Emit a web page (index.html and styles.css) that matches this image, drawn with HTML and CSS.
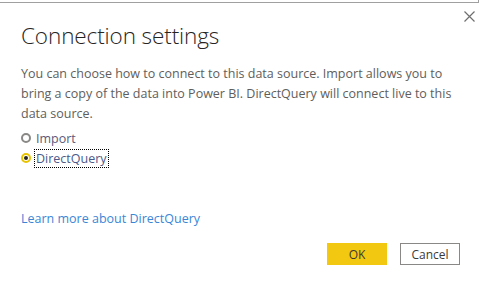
FILE: index.html
```html
<!DOCTYPE html>
<html lang="en">
<head>
    <meta charset="UTF-8">
    <title>Connection settings</title>
    <link rel="stylesheet" href="styles.css">
</head>
<body>
    <div class="frame-edge"></div>
    <div class="dialog">
        <button class="close" aria-label="Close">
            <svg width="11" height="11" viewBox="0 0 11 11">
                <path d="M0.5 0.5 L10.5 10.5 M10.5 0.5 L0.5 10.5" stroke="#6f6f6f" stroke-width="1.2" fill="none"/>
            </svg>
        </button>

        <h2 class="title">Connection settings</h2>

        <p class="description">You can choose how to connect to this data source. Import allows you to bring a copy of the data into Power BI. DirectQuery will connect live to this data source.</p>

        <div class="options">
            <label class="option">
                <span class="radio"></span>
                <span class="option-text">Import</span>
            </label>
            <label class="option selected">
                <span class="radio"></span>
                <span class="option-text focused">DirectQuery</span>
            </label>
        </div>

        <a class="learn-more" href="#">Learn more about DirectQuery</a>

        <div class="actions">
            <button class="btn btn-primary">OK</button>
            <button class="btn btn-secondary">Cancel</button>
        </div>
    </div>
</body>
</html>
```

FILE: styles.css
```css
/* General Styling */
* {
    margin: 0;
    padding: 0;
    box-sizing: border-box;
    font-family: 'Open Sans', 'Noto Sans', sans-serif;
}

body {
    width: 485px;
    height: 287px;
    background: #fff;
    position: relative;
    overflow: hidden;
}

/* cropped window border at the top */
.frame-edge {
    position: absolute;
    top: 0;
    left: 0;
    width: 479px;
    height: 3px;
    border-bottom: 1px solid #a0a0a0;
    border-right: 1px solid #a0a0a0;
}

.dialog {
    padding: 20px 21px 0 21px;
    position: relative;
    height: 100%;
}

.close {
    position: absolute;
    top: 11px;
    right: 10px;
    width: 11px;
    height: 11px;
    border: none;
    background: none;
    cursor: pointer;
    display: flex;
}

.title {
    font-size: 22.5px;
    font-weight: 300;
    color: #252423;
    line-height: 32px;
    letter-spacing: -0.1px;
}

.description {
    margin-top: 12px;
    font-size: 12.5px;
    line-height: 20px;
    color: #605e5c;
    width: 440px;
}

.options {
    margin-top: 4px;
    display: flex;
    flex-direction: column;
}

.option {
    display: flex;
    align-items: center;
    height: 20px;
    font-size: 12.5px;
    color: #605e5c;
}

.radio {
    width: 10px;
    height: 10px;
    border-radius: 50%;
    border: 2px solid #8a8886;
    margin-right: 4px;
    position: relative;
}

.option.selected .radio {
    border-color: #e8c300;
}

.option.selected .radio::after {
    content: "";
    position: absolute;
    top: 1px;
    left: 1px;
    width: 4px;
    height: 4px;
    border-radius: 50%;
    background: #252423;
}

.option-text {
    color: #5b5a7a;
    padding: 0 1px;
}

.option-text.focused {
    outline: 1px dotted #000;
    color: #4a5a8a;
}

.learn-more {
    display: inline-block;
    margin-top: 42px;
    font-size: 12.5px;
    color: #3a86d6;
    text-decoration: none;
}

.actions {
    display: flex;
    justify-content: flex-end;
    gap: 13px;
    margin-top: 15px;
    padding-right: 4px;
}

.btn {
    width: 60px;
    height: 22px;
    font-size: 12px;
    cursor: pointer;
}

.btn-primary {
    background: #f2c811;
    border: none;
    color: #3b3a39;
}

.btn-secondary {
    background: #fff;
    border: 1px solid #8a8886;
    color: #3b3a39;
}
```
